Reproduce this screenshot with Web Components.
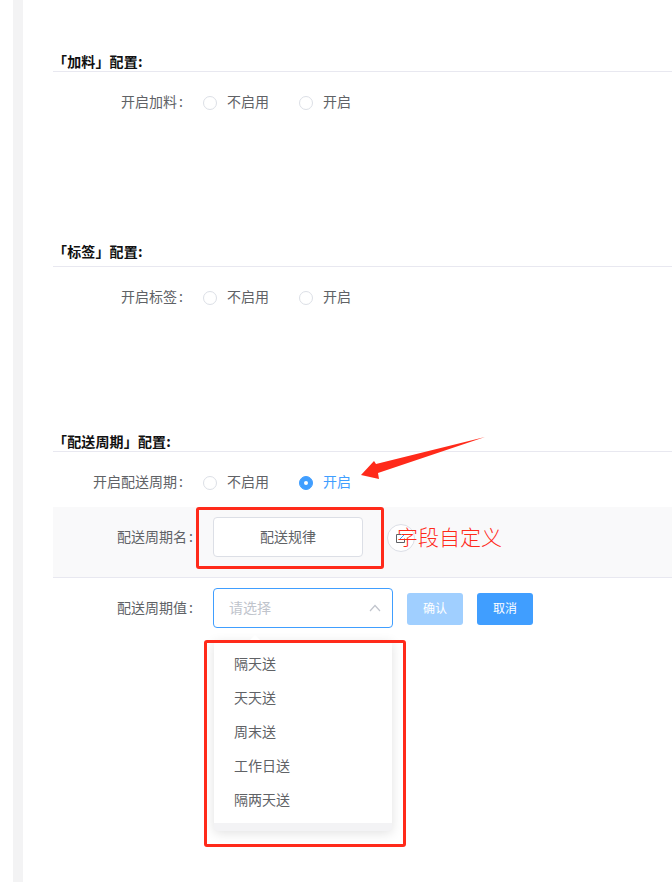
<!DOCTYPE html>
<html lang="zh">
<head>
<meta charset="utf-8">
<style>
html,body{margin:0;padding:0;background:#fff}
body{width:672px;height:882px;overflow:hidden;font-family:"Noto Sans CJK SC","Liberation Sans",sans-serif}
</style>
</head>
<body>
<config-page>
  <config-section heading="「加料」配置:" style="padding-top:52px;height:242px">
    <radio-row label="开启加料"></radio-row>
  </config-section>
  <config-section heading="「标签」配置:" head-height="25" style="height:190px">
    <radio-row label="开启标签"></radio-row>
  </config-section>
  <config-section heading="「配送周期」配置:">
    <radio-row label="开启配送周期" on></radio-row>
    <name-band label="配送周期名" value="配送规律"></name-band>
    <value-row label="配送周期值" placeholder="请选择">
      <span slot="option">隔天送</span>
      <span slot="option">天天送</span>
      <span slot="option">周末送</span>
      <span slot="option">工作日送</span>
      <span slot="option">隔两天送</span>
    </value-row>
  </config-section>
</config-page>
<red-notes></red-notes>
<script>
function def(name, build){
  customElements.define(name, class extends HTMLElement{
    connectedCallback(){
      if(this.shadowRoot) return;
      this.attachShadow({mode:'open'}).innerHTML = build(this);
    }
  });
}
const lab = t => `<div class="label">${t}<span style="margin-left:2px">:</span></div>`;
def('config-page', () => `<style>
:host{display:flex;height:882px}
.gutter{width:13px;flex:none}
.rail{width:10px;flex:none;background:#f3f3f4}
main{flex:1;min-width:0;padding-left:30px}
</style><div class="gutter"></div><div class="rail"></div><main><slot></slot></main>`);

def('config-section', el => {
  const h = el.getAttribute('head-height') || 20;
  return `<style>
:host{display:block;box-sizing:border-box}
h2{margin:0;box-sizing:border-box;height:${h}px;font-size:14px;line-height:18px;font-weight:700;color:#111;border-bottom:1px solid #e8e8f0;letter-spacing:.15px}
.body{padding-top:10px}
</style><h2>${el.getAttribute('heading')}</h2><div class="body"><slot></slot></div>`;
});

def('radio-row', el => {
  const on = el.hasAttribute('on');
  return `<style>
:host{display:flex;align-items:flex-start;height:40px;font-size:14px;line-height:38px;color:#606266}
.label{width:130px;text-align:right;flex:none}
.opts{display:flex;margin-left:20px}
.opt{display:flex;align-items:flex-start;margin-right:30px}
.dot{box-sizing:border-box;width:14px;height:14px;border:1px solid #dcdfe6;border-radius:50%;margin:14px 10px 0 0;background:#fff;display:flex;align-items:center;justify-content:center}
.on{color:#409eff}
.on .dot{background:#409eff;border-color:#409eff}
.on .dot::after{content:"";width:4px;height:4px;border-radius:50%;background:#fff}
</style>${lab(el.getAttribute('label'))}
<div class="opts"><div class="opt"><span class="dot"></span>不启用</div>
<div class="opt ${on?'on':''}"><span class="dot"></span>开启</div></div>`;
});

def('name-band', el => `<style>
:host{display:flex;align-items:flex-start;height:60px;padding-top:10px;margin-top:5px;background:#f9f9fa;border-bottom:1px solid #e8e8f0;font-size:14px;line-height:38px;color:#606266}
.label{width:140px;text-align:right;flex:none}
.input{box-sizing:border-box;width:150px;height:40px;margin-left:20px;border:1px solid #dcdfe6;border-radius:4px;background:#fff;text-align:center;line-height:36px}
.circle{box-sizing:border-box;width:28px;height:28px;margin:7px 0 0 24px;border:1px solid #dcdfe6;border-radius:50%;background:#fff;display:flex;align-items:center;justify-content:center}
svg{display:block}
</style>${lab(el.getAttribute('label'))}
<div class="input">${el.getAttribute('value')}</div>
<div class="circle"><svg width="14" height="14" viewBox="0 0 14 14" fill="none" stroke="#606266" stroke-width="1"><path d="M2.5 3.5h5M2.5 3.5v8h8v-4"/><path d="M6 8l5-5" stroke="#409eff"/></svg></div>`);

def('value-row', el => `<style>
:host{display:flex;align-items:flex-start;padding-top:10px;font-size:14px;line-height:38px;color:#606266}
.label{width:140px;height:40px;text-align:right;flex:none}
.select{position:relative;box-sizing:border-box;width:180px;height:40px;margin-left:20px;padding:0 11px 0 15px;border:1px solid #409eff;border-radius:4px;background:#fff;display:flex;align-items:flex-start;justify-content:space-between;color:#c0c4cc;line-height:36px}
.select svg{margin-top:15px}
.btn{box-sizing:border-box;width:56px;height:32px;margin:5px 0 0 14px;border-radius:3px;color:#fff;font-size:12px;line-height:30px;text-align:center}
.ok{background:#a0cfff}
.no{background:#409eff}
.pop{position:absolute;left:0;top:52px;width:178px;height:190px;box-sizing:border-box;background:#fff;box-shadow:0 2px 12px rgba(0,0,0,.12);border-radius:0 0 4px 4px;border-bottom:8px solid #f3f3f5;padding-top:6px;color:#606266;display:flex;flex-direction:column}
.pop::before{content:"";position:absolute;left:35px;top:-6px;width:0;height:0;border:6px solid transparent;border-top:0;border-bottom-color:#fff}
.list{display:flex;flex-direction:column;padding-left:20px}
::slotted(span){display:block;height:34px;line-height:32px}
</style>${lab(el.getAttribute('label'))}
<div class="select"><span>${el.getAttribute('placeholder')}</span>
<svg width="12" height="8" viewBox="0 0 12 8" fill="none" stroke="#c0c4cc" stroke-width="1.2"><path d="M1 7l5-5.5L11 7"/></svg>
<div class="pop"><div class="list"><slot name="option"></slot></div></div></div>
<div class="btn ok">确认</div><div class="btn no">取消</div>`);

def('red-notes', () => `<style>
:host{display:block;position:absolute;left:0;top:0;width:672px;height:882px;pointer-events:none}
.box{position:absolute;box-sizing:border-box;border:3px solid #ff2a1a;border-radius:3px}
.a{left:196px;top:507px;width:188px;height:62px}
.b{left:204px;top:640px;width:202px;height:207px}
.note{position:absolute;left:397px;top:521px;font-size:21px;line-height:30px;color:#ff2a1a;font-weight:300;white-space:nowrap}
svg{position:absolute;left:0;top:0}
</style>
<div class="box a"></div><div class="box b"></div>
<div class="note">字段自定义</div>
<svg width="672" height="882"><polygon points="485,437 376,464 374,461 361,475 379,479 378,473" fill="#ff2a1a"/></svg>`);
</script>
</body>
</html>
